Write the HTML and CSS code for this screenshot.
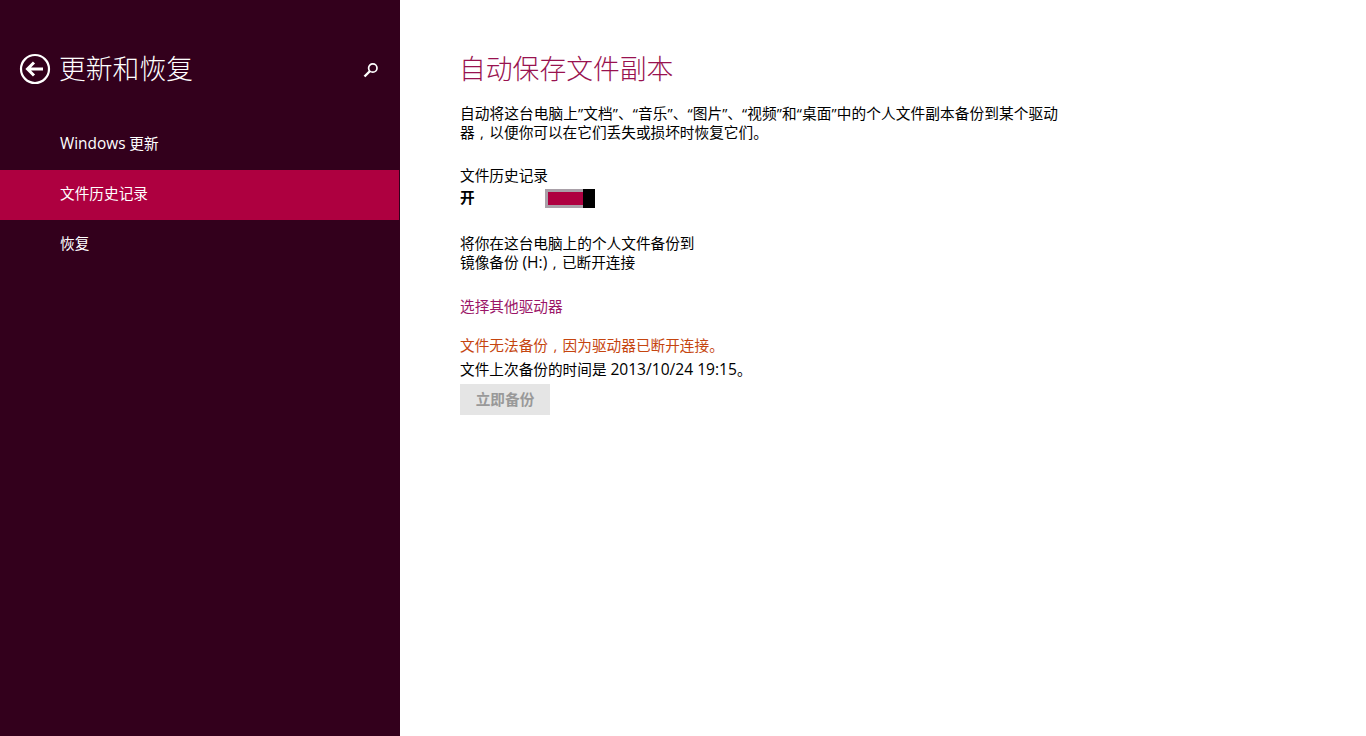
FILE: index.html
```html
<!DOCTYPE html>
<html lang="zh-CN">
<head>
    <meta charset="utf-8">
    <title>文件历史记录</title>
    <link rel="stylesheet" href="styles.css">
</head>
<body>
    <div class="sidebar">
        <div class="side-head">
            <svg class="back" width="32" height="32" viewBox="0 0 32 32">
                <circle cx="16" cy="16" r="14" fill="none" stroke="#fff" stroke-width="2.2"/>
                <path d="M24 16H9M15 9.5L8.5 16l6.5 6.5" fill="none" stroke="#fff" stroke-width="3"/>
            </svg>
            <h2>更新和恢复</h2>
            <svg class="search" width="16" height="16" viewBox="0 0 16 16">
                <circle cx="9.8" cy="6" r="4.2" fill="none" stroke="#fff" stroke-width="1.7"/>
                <path d="M7 9L1.5 14.5" fill="none" stroke="#fff" stroke-width="2.4"/>
            </svg>
        </div>
        <ul class="nav">
            <li><span><span class="win">Windows</span> 更新</span></li>
            <li class="active"><span>文件历史记录</span></li>
            <li><span>恢复</span></li>
        </ul>
    </div>
    <div class="main">
        <h1>自动保存文件副本</h1>
        <p class="intro">自动将这台电脑上”文档”、“音乐”、“图片”、“视频”和“桌面”中的个人文件副本备份到某个驱动<br>器<span class="comma">,</span>以便你可以在它们丢失或损坏时恢复它们。</p>
        <p class="label">文件历史记录</p>
        <div class="toggle-row">
            <b>开</b>
            <div class="toggle"><div class="track"></div><div class="thumb"></div></div>
        </div>
        <p class="drive">将你在这台电脑上的个人文件备份到<br>镜像备份 <span class="num">(H:)</span><span class="comma">,</span>已断开连接</p>
        <a class="link" href="#">选择其他驱动器</a>
        <p class="warn">文件无法备份<span class="comma">,</span>因为驱动器已断开连接。</p>
        <p class="last">文件上次备份的时间是 <span class="num">2013/10/24 19:15</span>。</p>
        <button class="btn" disabled>立即备份</button>
    </div>
</body>
</html>
```

FILE: styles.css
```css
body {
    margin: 0;
    padding: 0;
    height: 736px;
    overflow: hidden;
    display: flex;
    background: #ffffff;
    color: #000000;
    font-family: "Open Sans", "Noto Sans CJK SC", sans-serif;
    font-size: 14.67px;
    line-height: 19px;
}
.sidebar {
    width: 400px;
    height: 736px;
    background: #33001c;
    color: #ffffff;
    flex: none;
}
.side-head {
    display: flex;
    align-items: center;
    height: 40px;
    padding: 49px 20px 0 19px;
}
.side-head h2 {
    margin: 0 0 0 8px;
    font-size: 26.8px;
    font-weight: 300;
    line-height: 40px;
    flex: 1;
}
.search {
    margin: 2px 1px 0 0;
}
.nav {
    list-style: none;
    margin: 31px 0 0 0;
    padding: 0;
}
.nav li {
    display: flex;
    align-items: center;
    height: 46px;
    padding: 0 0 4px 60px;
    width: 339px;
}
.nav .active {
    background: #ae0040;
}
.win {
    font-size: 15.4px;
}
.main {
    padding: 49px 0 0 60px;
}
h1 {
    margin: 0 0 0 -1px;
    font-size: 26.8px;
    font-weight: 300;
    line-height: 40px;
    color: #99124f;
}
p {
    margin: 0;
}
.comma {
    display: inline-block;
    width: 1em;
    text-align: center;
}
.intro {
    margin-top: 15px;
}
.intro::first-line {
    letter-spacing: 0.1px;
}
.label {
    margin-top: 24px;
}
.toggle-row {
    display: flex;
    align-items: center;
    height: 20px;
    margin-top: 3px;
}
.toggle-row b {
    width: 85px;
    margin-bottom: 2px;
}
.toggle {
    display: flex;
    height: 19px;
}
.track {
    width: 35px;
    height: 13px;
    border: 3px solid #a9a0a8;
    border-right: none;
    background: #ae0040;
}
.thumb {
    width: 12px;
    height: 19px;
    background: #000000;
}
.drive {
    margin-top: 26px;
}
.link {
    display: block;
    margin-top: 25px;
    color: #9b1668;
    text-decoration: none;
}
.warn {
    margin-top: 20px;
    color: #c5450f;
}
.last {
    margin-top: 5px;
}
.num {
    font-size: 15.6px;
}
.btn {
    display: block;
    width: 90px;
    height: 31px;
    margin-top: 5px;
    border: none;
    padding: 0 0 2px;
    background: #e5e5e5;
    color: #999999;
    font: bold 14.67px "Open Sans", "Noto Sans CJK SC", sans-serif;
}
```
